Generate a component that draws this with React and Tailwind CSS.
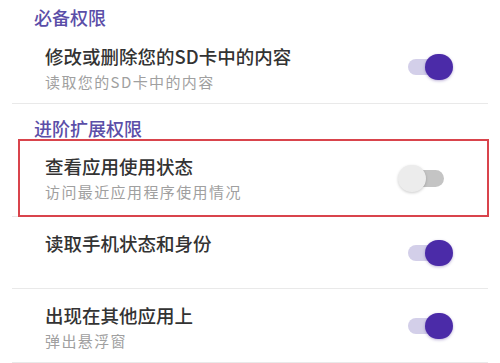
import React from "react";

function Toggle({ on }) {
  if (on) {
    return (
      <div className="flex items-center shrink-0">
        <div className="w-[30px] h-[16px] rounded-full bg-[#d3cfe9]" />
        <div className="relative z-10 -ml-[13px] w-[28px] h-[26px] rounded-full bg-[#4b2ba8] shadow-[0_1px_3px_rgba(60,30,140,0.35)]" />
      </div>
    );
  }
  return (
    <div className="flex items-center shrink-0 mr-[9px]">
      <div className="relative z-10 w-[28px] h-[27px] rounded-full bg-[#ececec] shadow-[0_1px_3px_rgba(0,0,0,0.2)]" />
      <div className="-ml-[10px] w-[28px] h-[17px] rounded-r-full bg-[#c4c4c4]" />
    </div>
  );
}

function Row({ title, sub, on, height, boxed }) {
  return (
    <div
      className="relative mx-[12px] border-b border-[#e9e9e9] flex items-center justify-between pl-[33px] pr-[35px]"
      style={{ height }}
    >
      <div className="self-start pt-[13px]">
        <p className="text-[18.5px] leading-[26px] font-medium text-[#333333]">{title}</p>
        {sub && (
          <p className="mt-[3px] text-[15px] leading-[20px] tracking-[1.4px] text-[#a0a0a0]">{sub}</p>
        )}
      </div>
      <Toggle on={on} />
      {boxed && (
        <div className="absolute left-[6px] right-[-1px] top-[-1px] bottom-[-1px] border-2 border-[#d9444c] pointer-events-none" />
      )}
    </div>
  );
}

export default function App() {
  return (
    <div
      className="w-[500px] h-[363px] bg-white overflow-hidden"
      style={{ fontFamily: '"Noto Sans CJK SC", "Noto Sans", sans-serif' }}
    >
      <div className="h-[30px] pl-[34px] pt-[4px] text-[18px] leading-[26px] font-medium text-[#5b4ea8]">必备权限</div>
      <Row title="修改或删除您的SD卡中的内容" sub="读取您的SD卡中的内容" on height={74} />
      <div className="h-[36px] pl-[34px] pt-[11px] text-[18px] leading-[26px] font-medium text-[#5b4ea8]">进阶扩展权限</div>
      <Row title="查看应用使用状态" sub="访问最近应用程序使用情况" on={false} height={77} boxed />
      <Row title="读取手机状态和身份" on height={72} />
      <Row title="出现在其他应用上" sub="弹出悬浮窗" on height={74} />
    </div>
  );
}
